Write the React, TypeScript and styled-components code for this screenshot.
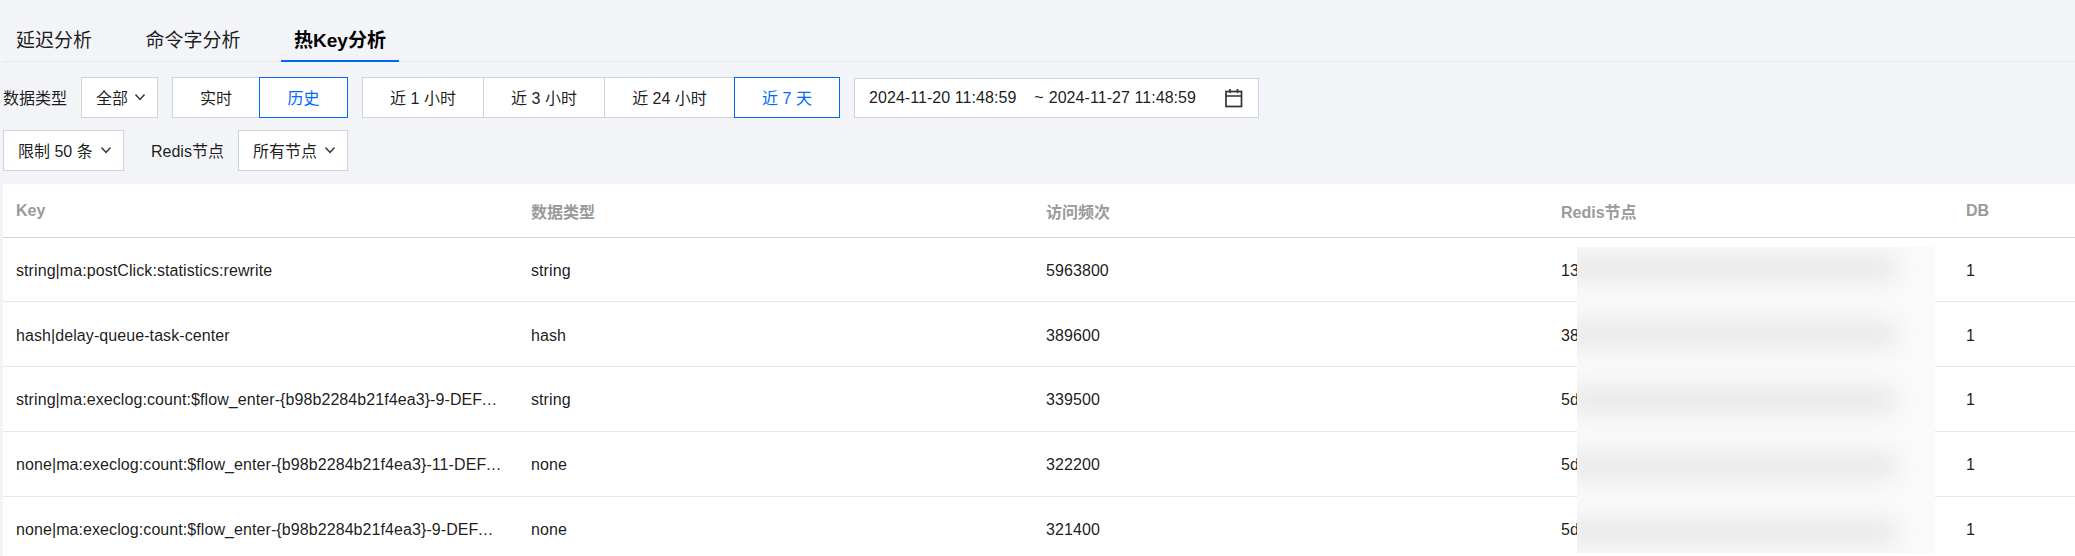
import React from "react";
import styled, { createGlobalStyle } from "styled-components";

const GlobalStyle = createGlobalStyle`
  html, body {
    margin: 0;
    height: 100%;
    overflow: hidden;
    background: #f3f4f8;
  }
  body {
    font-family: "Liberation Sans", "Noto Sans CJK SC", sans-serif;
    font-size: 16px;
    color: rgba(0, 0, 0, 0.9);
  }
`;

const rows = [
  { key: "string|ma:postClick:statistics:rewrite", type: "string", freq: "5963800", node: "13", db: "1" },
  { key: "hash|delay-queue-task-center", type: "hash", freq: "389600", node: "38", db: "1" },
  { key: "string|ma:execlog:count:$flow_enter-{b98b2284b21f4ea3}-9-DEFAULT", type: "string", freq: "339500", node: "5d", db: "1" },
  { key: "none|ma:execlog:count:$flow_enter-{b98b2284b21f4ea3}-11-DEFAULT", type: "none", freq: "322200", node: "5d", db: "1" },
  { key: "none|ma:execlog:count:$flow_enter-{b98b2284b21f4ea3}-9-DEFAULT", type: "none", freq: "321400", node: "5d", db: "1" },
];

const Chevron = () => (
  <ChevronIcon width="14" height="14" viewBox="0 0 14 14" fill="none">
    <path d="M2.500 4.500 7 9.500l4.500-5" stroke="currentColor" strokeWidth="1.500" />
  </ChevronIcon>
);

const CalendarIcon = () => (
  <svg width="20" height="20" viewBox="0 0 20 20" fill="none" stroke="#333" strokeWidth="1.700">
    <rect x="2" y="3.500" width="15.500" height="15" />
    <path d="M2 8h15.500M6 1v4M13.500 1v4" />
  </svg>
);

export default function App() {
  return (
    <Page>
      <GlobalStyle />
      <Tabs>
        <Tab>延迟分析</Tab>
        <Tab>命令字分析</Tab>
        <Tab $active>热Key分析</Tab>
      </Tabs>
      <FilterRow>
        <Label>数据类型</Label>
        <Select $width={77}>
          全部
          <Chevron />
        </Select>
        <Group>
          <SegButton $width={88}>实时</SegButton>
          <SegButton $width={89} $active>历史</SegButton>
        </Group>
        <Group>
          <SegButton $width={122}>近 1 小时</SegButton>
          <SegButton $width={122}>近 3 小时</SegButton>
          <SegButton $width={131}>近 24 小时</SegButton>
          <SegButton $width={106} $active>近 7 天</SegButton>
        </Group>
        <DateRange>
          <DateText>2024-11-20 11:48:59</DateText>
          <DateSep>~</DateSep>
          <DateText>2024-11-27 11:48:59</DateText>
          <DateIcon>
            <CalendarIcon />
          </DateIcon>
        </DateRange>
      </FilterRow>
      <FilterRow $second>
        <Select $width={121}>
          限制 50 条
          <Chevron />
        </Select>
        <NodeLabel>Redis节点</NodeLabel>
        <Select $width={110}>
          所有节点
          <Chevron />
        </Select>
      </FilterRow>
      <TableCard>
        <Table>
          <colgroup>
            <col style={{ width: 515 }} />
            <col style={{ width: 515 }} />
            <col style={{ width: 515 }} />
            <col style={{ width: 405 }} />
            <col />
          </colgroup>
          <thead>
            <tr>
              <Th>Key</Th>
              <Th>数据类型</Th>
              <Th>访问频次</Th>
              <Th>Redis节点</Th>
              <Th>DB</Th>
            </tr>
          </thead>
          <tbody>
            {rows.map((row) => (
              <tr key={row.key}>
                <Td>
                  <KeyText>{row.key}</KeyText>
                </Td>
                <Td>{row.type}</Td>
                <Td>{row.freq}</Td>
                <Td>{row.node}</Td>
                <Td>{row.db}</Td>
              </tr>
            ))}
          </tbody>
        </Table>
        <BlurPatch>
          {rows.map((row) => (
            <BlurBand key={row.key} />
          ))}
        </BlurPatch>
      </TableCard>
    </Page>
  );
}

const Page = styled.div`
  height: 556px;
  overflow: hidden;
  padding-left: 3px;
`;

const Tabs = styled.div`
  display: flex;
  gap: 27.5px;
  height: 62px;
  box-sizing: border-box;
  align-items: flex-end;
  border-bottom: 1px solid #e7e8ee;
  margin-bottom: 15px;
`;

const Tab = styled.div<{ $active?: boolean }>`
  height: 42px;
  line-height: 42px;
  padding: 0 13px;
  font-size: 19px;
  box-sizing: border-box;
  margin-bottom: -1px;
  font-weight: ${(p) => (p.$active ? 700 : 400)};
  color: ${(p) => (p.$active ? "#000" : "rgba(0, 0, 0, 0.9)")};
  border-bottom: 2px solid ${(p) => (p.$active ? "#0067ff" : "transparent")};
`;

const FilterRow = styled.div<{ $second?: boolean }>`
  display: flex;
  align-items: center;
  gap: 14px;
  height: 41px;
  margin-bottom: ${(p) => (p.$second ? "13px" : "12px")};
`;

const Label = styled.span`
  width: 64px;
  padding-bottom: 2px;
`;

const NodeLabel = styled.span`
  margin-left: 13px;
  width: 73px;
  padding-bottom: 2px;
`;

const Select = styled.div<{ $width: number }>`
  width: ${(p) => p.$width}px;
  height: 41px;
  box-sizing: border-box;
  display: flex;
  align-items: center;
  justify-content: space-between;
  padding: 0 10px 2px 14px;
  background: #fff;
  border: 1px solid #cfd3de;
  white-space: nowrap;
`;

const ChevronIcon = styled.svg`
  color: #333;
  flex: none;
`;

const Group = styled.div`
  display: flex;
`;

const SegButton = styled.div<{ $width: number; $active?: boolean }>`
  width: ${(p) => p.$width}px;
  height: 41px;
  box-sizing: border-box;
  display: flex;
  align-items: center;
  justify-content: center;
  padding-bottom: 2px;
  margin-left: -1px;
  background: #fff;
  border: 1px solid ${(p) => (p.$active ? "#0067ff" : "#cfd3de")};
  color: ${(p) => (p.$active ? "#0067ff" : "rgba(0, 0, 0, 0.9)")};
  position: ${(p) => (p.$active ? "relative" : "static")};
  &:first-child {
    margin-left: 0;
  }
`;

const DateRange = styled.div`
  width: 405px;
  height: 40px;
  box-sizing: border-box;
  display: flex;
  align-items: center;
  padding-left: 14px;
  background: #fff;
  border: 1px solid #cfd3de;
`;

const DateText = styled.span`
  white-space: nowrap;
  letter-spacing: 0.06px;
`;

const DateSep = styled.span`
  margin: 0 5px 0 18px;
`;

const DateIcon = styled.span`
  display: flex;
  margin-left: 28px;
`;

const TableCard = styled.div`
  position: relative;
  background: #fff;
`;

const Table = styled.table`
  width: 100%;
  table-layout: fixed;
  border-collapse: collapse;
`;

const Th = styled.th`
  height: 53px;
  padding: 1px 13px 0;
  box-sizing: border-box;
  text-align: left;
  font-weight: 700;
  color: #9a9a9a;
  border-bottom: 1px solid #cfd3de;
`;

const Td = styled.td`
  height: 64.750px;
  box-sizing: border-box;
  padding: 3px 13px 0;
  border-bottom: 1px solid #e7e8ee;
  white-space: nowrap;
  letter-spacing: 0.08px;
`;

const KeyText = styled.div`
  overflow: hidden;
  text-overflow: ellipsis;
  white-space: nowrap;
  padding-right: 2px;
`;

const BlurPatch = styled.div`
  position: absolute;
  left: 1574px;
  top: 63px;
  width: 358px;
  height: 306px;
  overflow: hidden;
  background: #fafafa;
  display: flex;
  flex-direction: column;
  justify-content: space-between;
  padding: 8px 0;
  box-sizing: border-box;
`;

const BlurBand = styled.div`
  height: 26px;
  width: 332px;
  margin-left: -14px;
  background: #e8e8e8;
  filter: blur(11px);
`;
